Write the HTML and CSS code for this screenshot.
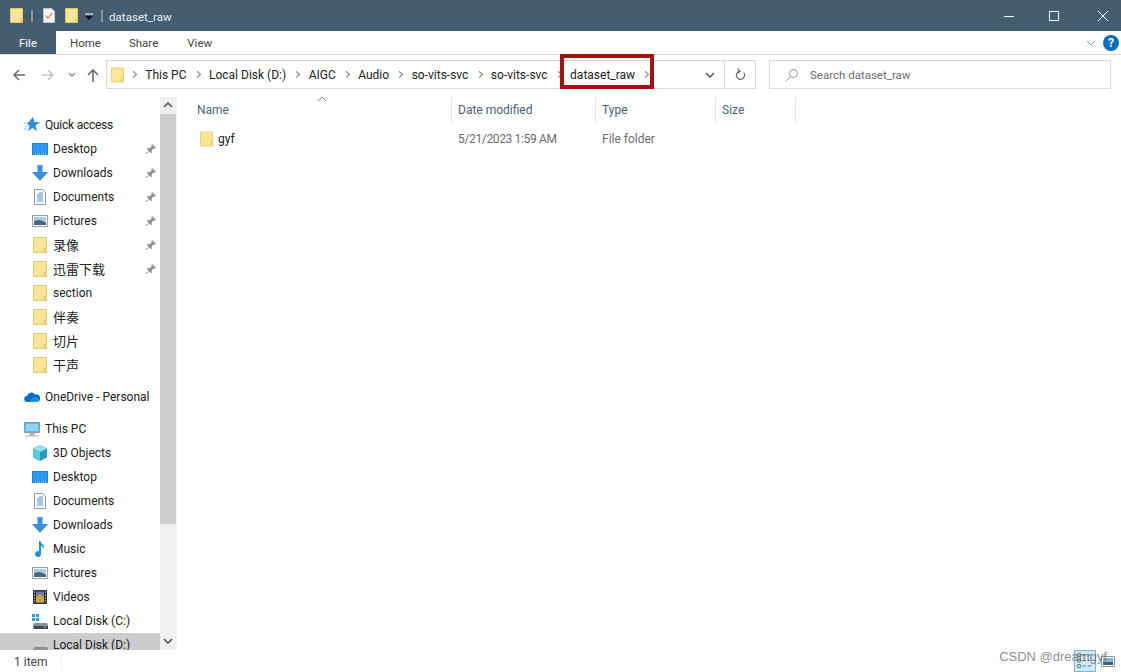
FILE: index.html
```html
<!DOCTYPE html>
<html lang="en">
<head>
  <meta charset="UTF-8">
  <title>dataset_raw</title>
  <meta name="viewport" content="width=device-width, initial-scale=1">
  <link rel="stylesheet" href="styles.css">
</head>
<body>

  <!-- shared icons -->
  <svg class="defs" width="0" height="0">
    <symbol id="i-folder" viewBox="0 0 14 16">
      <path d="M.5.5h13v15H.5z" fill="#fbe596" stroke="#e9cb6c"/>
      <path d="M10.500 15.500v-4l3-1.500v5.500z" fill="#f3d36f"/>
    </symbol>
    <symbol id="i-pin" viewBox="0 0 12 12">
      <path d="M7 1l4 4-1 .6-1.600-.1L6.500 7.400 6.900 9.500 6 10.300 1.700 6l.8-.9 2.100.4 1.900-1.900-.1-1.600z" fill="#8d8d8d"/>
      <path d="M3.500 8.500L1 11" stroke="#8d8d8d" fill="none"/>
    </symbol>
    <symbol id="i-desktop" viewBox="0 0 16 16">
      <path d="M0 2h16v12H0z" fill="#1583e0"/>
      <path d="M1 3h14v9H1z" fill="#2f9bf0"/>
      <path d="M3 13h11" stroke="#dff0fc" stroke-dasharray="1 1"/>
    </symbol>
    <symbol id="i-down" viewBox="0 0 16 16">
      <path d="M5.500 0h5v7H16l-8 9-8-9h5.500z" fill="#3f8edb"/>
    </symbol>
    <symbol id="i-doc" viewBox="0 0 16 16">
      <path d="M2.500.5h8l3 3v12h-11z" fill="#fff" stroke="#8b98a5"/>
      <path d="M7 4h4M5 6h6M5 8h6M5 10h6M5 12h6" stroke="#3f95d8"/>
    </symbol>
    <symbol id="i-pic" viewBox="0 0 16 16">
      <path d="M.5 2.500h15v11H.5z" fill="#fff" stroke="#9aa0a6"/>
      <path d="M2 4h12v4H2z" fill="#a9cbe8"/>
      <path d="M2 8l5-1 7 2v3H2z" fill="#4d6672"/>
    </symbol>
  </svg>

  <div class="window">

    <header class="titlebar">
      <svg class="qa-folder"><use href="#i-folder"/></svg>
      <span class="qa-sep"></span>
      <svg class="qa-props" viewBox="0 0 13 16">
        <path d="M.5.500h9l3 3v12H.5z" fill="#f4f4f4" stroke="#c9c9c9"/>
        <path d="M3 8l2.500 3L10 5" fill="none" stroke="#d2402c"/>
      </svg>
      <svg class="qa-folder"><use href="#i-folder"/></svg>
      <svg class="qa-drop" viewBox="0 0 8 8">
        <path d="M0 1h8" stroke="#fff"/>
        <path d="M0 3h8L4 7z" fill="#111"/>
      </svg>
      <span class="qa-sep"></span>
      <span class="title">dataset_raw</span>
      <div class="win-btns">
        <svg viewBox="0 0 10 10"><path d="M0 5.500h10" stroke="#fff"/></svg>
        <svg viewBox="0 0 10 10"><path d="M.5.500h9v9h-9z" fill="none" stroke="#fff"/></svg>
        <svg class="win-close" viewBox="0 0 10 10"><path d="M0 0l10 10M10 0L0 10" stroke="#fff"/></svg>
      </div>
    </header>

    <nav class="ribbon">
      <a class="tab tab-file">File</a>
      <a class="tab tab-home">Home</a>
      <a class="tab tab-share">Share</a>
      <a class="tab tab-view">View</a>
      <svg class="ribbon-min" viewBox="0 0 10 6"><path d="M1 1l4 4 4-4" fill="none" stroke="#9a9a9a"/></svg>
      <span class="help">?</span>
    </nav>

    <div class="addr-row">
      <svg class="nav-btn back" viewBox="0 0 12 12"><path d="M12 6H1.500M6 1L1 6l5 5" fill="none" stroke="#6a6a6a" stroke-width="1.500"/></svg>
      <svg class="nav-btn forward" viewBox="0 0 12 12"><path d="M0 6h10.500M6 1l5 5-5 5" fill="none" stroke="#c4c4c4" stroke-width="1.500"/></svg>
      <svg class="nav-drop" viewBox="0 0 8 6"><path d="M1 1l3 3 3-3" fill="none" stroke="#8a8a8a" stroke-width="1.300"/></svg>
      <svg class="nav-btn up" viewBox="0 0 12 14"><path d="M6 14V2M1 7l5-5 5 5" fill="none" stroke="#666" stroke-width="1.500"/></svg>

      <div class="addr-box">
        <svg class="addr-folder"><use href="#i-folder"/></svg>
        <div class="crumbs">
          <span class="crumb-sep"></span><span>This PC</span>
          <span class="crumb-sep"></span><span>Local Disk (D:)</span>
          <span class="crumb-sep"></span><span>AIGC</span>
          <span class="crumb-sep"></span><span>Audio</span>
          <span class="crumb-sep"></span><span>so-vits-svc</span>
          <span class="crumb-sep"></span><span>so-vits-svc</span>
          <span class="crumb-sep"></span><span>dataset_raw</span>
          <span class="crumb-sep"></span>
        </div>
        <svg class="addr-drop" viewBox="0 0 10 6"><path d="M1 1l4 4 4-4" fill="none" stroke="#555" stroke-width="1.500"/></svg>
        <div class="refresh">
          <svg viewBox="0 0 12 14"><path d="M9.500 4.500a4.500 4.500 0 1 1-5-1.500M3 0l2.500 3L2.500 5" fill="none" stroke="#666" stroke-width="1.300"/></svg>
        </div>
      </div>

      <div class="search-box">
        <svg viewBox="0 0 14 14"><circle cx="8.500" cy="5.500" r="4" fill="none" stroke="#999"/><path d="M5.500 8.500L1 13" stroke="#999"/></svg>
        <span>Search dataset_raw</span>
      </div>

      <div class="highlight"></div>
    </div>

    <div class="main">
      <aside class="sidebar">
        <div class="tree">
          <div class="tree-item top first">
            <svg class="icon" viewBox="0 0 16 16"><path d="M9 0l1.500 5H16l-4.500 3.500L13 14l-4.500-3L4 14l1.500-5.500L3 7" fill="#2f8fe0"/><path d="M0 6h4M1 9h3M0 12h3" stroke="#7cc0f0"/></svg>
            <span class="tight">Quick access</span>
          </div>
          <div class="tree-item"><svg class="icon"><use href="#i-desktop"/></svg><span>Desktop</span><svg class="pin"><use href="#i-pin"/></svg></div>
          <div class="tree-item"><svg class="icon"><use href="#i-down"/></svg><span>Downloads</span><svg class="pin"><use href="#i-pin"/></svg></div>
          <div class="tree-item"><svg class="icon"><use href="#i-doc"/></svg><span>Documents</span><svg class="pin"><use href="#i-pin"/></svg></div>
          <div class="tree-item"><svg class="icon"><use href="#i-pic"/></svg><span>Pictures</span><svg class="pin"><use href="#i-pin"/></svg></div>
          <div class="tree-item"><svg class="icon"><use href="#i-folder"/></svg><span class="cjk">录像</span><svg class="pin"><use href="#i-pin"/></svg></div>
          <div class="tree-item"><svg class="icon"><use href="#i-folder"/></svg><span class="cjk">迅雷下载</span><svg class="pin"><use href="#i-pin"/></svg></div>
          <div class="tree-item"><svg class="icon"><use href="#i-folder"/></svg><span>section</span></div>
          <div class="tree-item"><svg class="icon"><use href="#i-folder"/></svg><span class="cjk">伴奏</span></div>
          <div class="tree-item"><svg class="icon"><use href="#i-folder"/></svg><span class="cjk">切片</span></div>
          <div class="tree-item"><svg class="icon"><use href="#i-folder"/></svg><span class="cjk">干声</span></div>

          <div class="tree-item top group">
            <svg class="icon" viewBox="0 0 16 16"><path d="M3.500 13a3 3 0 0 1-.5-6 4.500 4.500 0 0 1 8-1.500A3.700 3.700 0 0 1 13.500 13z" fill="#0a6cc4"/><path d="M5 13l4-4.500 3-1 3.500 3-1.500 2.500z" fill="#1f8fe6"/></svg>
            <span>OneDrive - Personal</span>
          </div>

          <div class="tree-item top group">
            <svg class="icon" viewBox="0 0 16 16"><path d="M.5 1.500h15v10H.5z" fill="#5fb6ee" stroke="#8a9aa6"/><path d="M2 3h12v7H2z" fill="#8fd3f8"/><path d="M6 12h4v2H6zM1 15h14" fill="#a8b2ba" stroke="#a8b2ba"/></svg>
            <span>This PC</span>
          </div>
          <div class="tree-item">
            <svg class="icon" viewBox="0 0 16 16"><path d="M8 0l7 3.500v9L8 16l-7-3.500v-9z" fill="#1fa3b8"/><path d="M8 0l7 3.500L8 7 1 3.500z" fill="#9fe3ea"/><path d="M1 3.500L8 7v9l-7-3.500z" fill="#5cc8da"/></svg>
            <span>3D Objects</span>
          </div>
          <div class="tree-item"><svg class="icon"><use href="#i-desktop"/></svg><span>Desktop</span></div>
          <div class="tree-item"><svg class="icon"><use href="#i-doc"/></svg><span>Documents</span></div>
          <div class="tree-item"><svg class="icon"><use href="#i-down"/></svg><span>Downloads</span></div>
          <div class="tree-item">
            <svg class="icon" viewBox="0 0 16 16"><path d="M7 0h1.500c.3 3 4.500 4 3.500 8-.5-2-2-3-3-3v8a3 3 0 1 1-2-2.800z" fill="#1b8fe0"/></svg>
            <span>Music</span>
          </div>
          <div class="tree-item"><svg class="icon"><use href="#i-pic"/></svg><span>Pictures</span></div>
          <div class="tree-item">
            <svg class="icon" viewBox="0 0 16 16"><path d="M1 1h14v14H1z" fill="#2d3238"/><path d="M4 2.500h8v11H4z" fill="#6a7fa0"/><path d="M4 8l4-3 4 3v5.500H4z" fill="#c9a13f"/><path d="M2 3h1M2 6h1M2 9h1M2 12h1M13 3h1M13 6h1M13 9h1M13 12h1" stroke="#fff"/></svg>
            <span>Videos</span>
          </div>
          <div class="tree-item">
            <svg class="icon" viewBox="0 0 16 16"><path d="M0 1h3v3H0zM4 1h3v3H4zM0 5h3v3H0zM4 5h3v3H4z" fill="#20a4e8"/><path d="M2 10h13l1 2v4H1v-4z" fill="#8b9297"/><path d="M2 13h14v3H2z" fill="#454b50"/><path d="M12 14h2" stroke="#7fe07f"/></svg>
            <span>Local Disk (C:)</span>
          </div>
          <div class="tree-item selected">
            <svg class="icon" viewBox="0 0 16 16"><path d="M2 10h13l1 2v4H1v-4z" fill="#8b9297"/><path d="M2 13h14v3H2z" fill="#454b50"/></svg>
            <span>Local Disk (D:)</span>
          </div>
        </div>
        <div class="scrollbar">
          <svg class="sb-btn" viewBox="0 0 10 6"><path d="M1 5l4-4 4 4" fill="none" stroke="#505050" stroke-width="1.500"/></svg>
          <div class="sb-thumb"></div>
          <div class="sb-rest"></div>
          <svg class="sb-btn" viewBox="0 0 10 6"><path d="M1 1l4 4 4-4" fill="none" stroke="#505050" stroke-width="1.500"/></svg>
        </div>
      </aside>

      <section class="files">
        <div class="cols col-head">
          <div>Name</div>
          <div>Date modified</div>
          <div>Type</div>
          <div>Size</div>
          <svg class="sort" viewBox="0 0 10 6"><path d="M1 5l4-4 4 4" fill="none" stroke="#8c8c8c"/></svg>
        </div>
        <div class="cols file-row">
          <div class="file-name"><svg><use href="#i-folder"/></svg><span>gyf</span></div>
          <div class="file-date">5/21/2023 1:59 AM</div>
          <div>File folder</div>
          <div></div>
        </div>
      </section>
    </div>

    <footer class="status">
      <span class="count">1 item</span>
      <div class="views">
        <div class="view-list">
          <svg viewBox="0 0 22 22"><path d="M3 3h3v3H3zM3 9h3v3H3zM3 15h3v3H3z" fill="none" stroke="#5b6b78"/><path d="M8 4.500h4M14 4.500h4M8 10.500h4M14 10.500h4M8 16.500h4M14 16.500h4" stroke="#5b6b78"/></svg>
        </div>
        <svg class="view-large" viewBox="0 0 14 11"><path d="M.5.500h13v10H.5z" fill="#fff" stroke="#8a949c"/><path d="M2 2h10v4H2z" fill="#7fb4de"/><path d="M2 6h10v3H2z" fill="#48606e"/></svg>
      </div>
    </footer>

    <div class="watermark">CSDN @dreamgyf</div>
  </div>

</body>
</html>
```

FILE: styles.css
```css
body {
  margin: 0;
  font-family: Roboto, "Noto Sans CJK SC", sans-serif;
  font-size: 12px;
  color: #222;
  background: #fff;
  overflow: hidden;
}

.defs {
  position: absolute;
}

.window {
  position: relative;
  display: flex;
  flex-direction: column;
  height: 672px;
  overflow: hidden;
}

/* ===== TITLE BAR ==== */
.titlebar {
  display: flex;
  align-items: center;
  flex: 0 0 31px;
  padding-left: 10px;
  background-color: #455d70;
  color: #e6ebef;
}

.qa-folder {
  width: 13px;
  height: 15px;
}

.qa-props {
  width: 12px;
  height: 15px;
  margin: 0 10px;
}

.qa-sep {
  width: 2px;
  height: 12px;
  margin-left: 8px;
  background-color: #8497a5;
}

.qa-drop {
  width: 8px;
  height: 8px;
  margin: 2px 0 0 7px;
}

.title {
  margin: 2px 0 0 6px;
  font-size: 11.600px;
}

.win-btns {
  display: flex;
  gap: 35px;
  margin-left: auto;
  margin-right: 13px;
}

.win-btns svg {
  width: 10px;
  height: 10px;
}

.win-btns .win-close {
  margin-left: 4px;
}

/* ===== RIBBON ==== */
.ribbon {
  display: flex;
  align-items: center;
  flex: 0 0 23px;
  border-bottom: 1px solid #dadada;
  box-sizing: content-box;
}

.tab {
  color: #444;
  font-size: 11.500px;
}

.tab-file {
  align-self: stretch;
  display: flex;
  align-items: center;
  justify-content: center;
  width: 56px;
  background-color: #455d70;
  color: #fff;
}

.tab-home {
  margin-left: 14px;
}

.tab-share {
  margin-left: 28px;
}

.tab-view {
  margin-left: 29px;
}

.ribbon-min {
  width: 10px;
  height: 6px;
  margin-left: auto;
  margin-right: 7px;
}

.help {
  width: 16px;
  height: 16px;
  margin-right: 2px;
  border-radius: 50%;
  background-color: #0f6cbd;
  color: #fff;
  font-size: 12px;
  font-weight: bold;
  line-height: 16px;
  text-align: center;
}

/* ===== ADDRESS ROW ==== */
.addr-row {
  position: relative;
  display: flex;
  align-items: center;
  flex: 0 0 42px;
  padding: 5px 10px 8px 13px;
  box-sizing: border-box;
}

.nav-btn {
  width: 12px;
  height: 12px;
}

.forward {
  margin-left: 17px;
}

.nav-drop {
  width: 8px;
  height: 6px;
  margin-left: 14px;
}

.up {
  height: 14px;
  margin: 0 7px 0 11px;
}

.addr-box {
  display: flex;
  align-items: center;
  width: 650px;
  height: 29px;
  border: 1px solid #d9d9d9;
  box-sizing: border-box;
}

.addr-folder {
  width: 13px;
  height: 16px;
  margin-left: 4px;
}

.crumbs {
  display: flex;
  align-items: center;
  gap: 7.250px;
  margin-left: 6px;
  color: #222;
  white-space: nowrap;
}

.crumb-sep {
  width: 4px;
  height: 4px;
  margin: 0 2px 0 1px;
  border-top: 1px solid #777;
  border-right: 1px solid #777;
  transform: rotate(45deg);
}

.addr-drop {
  width: 10px;
  height: 6px;
  margin-left: auto;
  margin-right: 9px;
}

.refresh {
  display: flex;
  align-items: center;
  justify-content: center;
  width: 30px;
  height: 27px;
  border-left: 1px solid #d9d9d9;
}

.refresh svg {
  width: 11px;
  height: 14px;
}

.search-box {
  display: flex;
  align-items: center;
  gap: 11px;
  flex: 1;
  height: 29px;
  margin-left: 13px;
  padding-left: 15px;
  border: 1px solid #d9d9d9;
  box-sizing: border-box;
  color: #6d6d6d;
  font-size: 11.500px;
}

.search-box svg {
  width: 14px;
  height: 14px;
}

/* red annotation drawn on the screenshot */
.highlight {
  position: absolute;
  left: 560px;
  top: -1px;
  width: 94px;
  height: 35px;
  border: 4px solid #a5120b;
  box-sizing: border-box;
}

/* ===== MAIN ==== */
.main {
  display: flex;
  flex: 1;
  min-height: 0;
}

.sidebar {
  display: flex;
  flex: 0 0 177px;
  border-right: 1px solid #f2f2f2;
  box-sizing: border-box;
}

.tree {
  flex: 0 0 160px;
  overflow: hidden;
}

.tree-item {
  display: flex;
  align-items: center;
  height: 24px;
  padding-left: 32px;
  color: #222;
  white-space: nowrap;
}

.tree-item.first {
  margin-top: 16px;
}

.tree-item.top {
  padding-left: 24px;
}

.tree-item.group {
  margin-top: 8px;
}

.tree-item.selected {
  background-color: #cccccc;
}

.tight {
  letter-spacing: -0.250px;
}

.cjk {
  margin-top: -2px;
  font-size: 13px;
}

.icon {
  flex: 0 0 16px;
  width: 16px;
  height: 16px;
  margin-right: 5px;
}

.pin {
  width: 12px;
  height: 12px;
  margin-left: auto;
  margin-right: 3px;
}

.scrollbar {
  display: flex;
  flex-direction: column;
  flex: 0 0 16px;
  background-color: #f0f0f0;
}

.sb-btn {
  flex: 0 0 6px;
  width: 10px;
  height: 6px;
  margin: 5px 3px 6px;
}

.sb-thumb {
  flex: 0 0 410px;
  background-color: #cdcdcd;
}

.sb-rest {
  flex: 1;
}

/* ===== FILE LIST ==== */
.files {
  flex: 1;
  min-width: 0;
}

.cols {
  display: grid;
  grid-template-columns: 275px 144px 120px 80px;
}

.col-head {
  position: relative;
  height: 25px;
  color: #4c607a;
}

.col-head > div {
  display: flex;
  align-items: center;
  padding-left: 6px;
  border-right: 1px solid #e5e5e5;
}

.col-head > div:first-child {
  padding-left: 20px;
}

.sort {
  position: absolute;
  left: 140px;
  top: -1px;
  width: 10px;
  height: 6px;
}

.file-row {
  align-items: center;
  height: 24px;
  margin-top: 5px;
  color: #6d6d6d;
}

.file-row > div {
  padding-left: 6px;
}

.file-row .file-date {
  letter-spacing: -0.350px;
}

.file-row .file-name {
  display: flex;
  align-items: center;
  gap: 5px;
  padding-left: 23px;
  color: #222;
}

.file-name svg {
  width: 13px;
  height: 16px;
}

/* ===== STATUS BAR ==== */
.status {
  display: flex;
  align-items: center;
  flex: 0 0 22px;
  padding-left: 14px;
  color: #444;
}

.count {
  margin-top: 1px;
  padding-right: 14px;
  border-right: 1px solid #eee;
}

.views {
  display: flex;
  align-items: center;
  margin-left: auto;
  margin-right: 6px;
}

.view-list {
  width: 22px;
  height: 22px;
  margin-right: 5px;
  background-color: #cde8f7;
  border: 1px solid #7fb8d6;
  box-sizing: border-box;
}

.view-list svg {
  display: block;
  width: 20px;
  height: 20px;
}

.view-large {
  width: 14px;
  height: 11px;
}

/* ===== CSDN WATERMARK ==== */
.watermark {
  position: absolute;
  right: 14px;
  bottom: 8px;
  font-family: "Liberation Sans", sans-serif;
  font-size: 13px;
  color: rgba(90, 90, 90, 0.7);
}
```
